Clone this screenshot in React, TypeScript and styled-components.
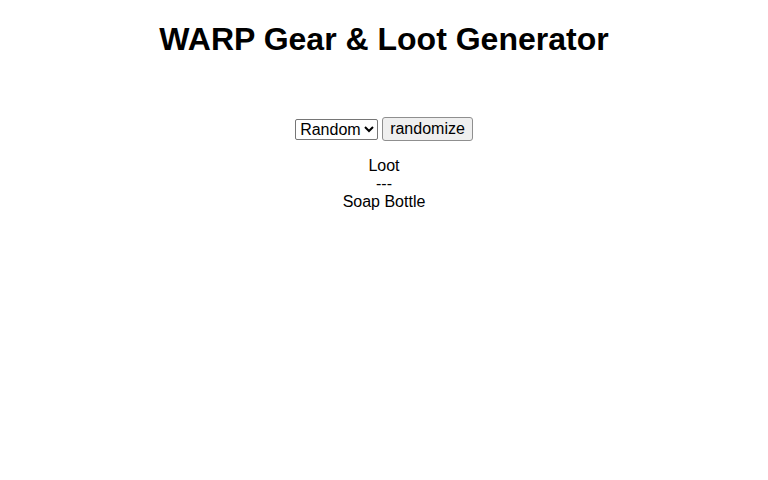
import styled, { createGlobalStyle } from 'styled-components';
import { useState } from 'react';

const GlobalStyle = createGlobalStyle`
  body {
    margin: 8px;
    background: #fff;
    color: #000;
    font-family: 'Liberation Sans', Arial, sans-serif;
  }
`;

const lootTable = ['Soap Bottle', 'Rusty Wrench', 'Flashlight', 'Canned Beans', 'Duct Tape'];

const App = () => {
  const [kind, setKind] = useState('Random');
  const [item, setItem] = useState('Soap Bottle');

  const randomize = () => {
    setItem(lootTable[Math.floor(Math.random() * lootTable.length)]);
  };

  return (
    <Page>
      <GlobalStyle />
      <Title>WARP Gear &amp; Loot Generator</Title>

      <Controls>
        <KindSelect value={kind} onChange={(e) => setKind(e.target.value)}>
          <option>Random</option>
          <option>Gear</option>
          <option>Loot</option>
        </KindSelect>
        <RandomButton onClick={randomize}>randomize</RandomButton>
      </Controls>

      <Result>
        <div>Loot</div>
        <div>---</div>
        <div>{item}</div>
      </Result>
    </Page>
  );
};

export default App;

const Page = styled.div`
  text-align: center;
`;

const Title = styled.h1`
  font-size: 32px;
  font-weight: bold;
  margin: 13px 0 0;
  line-height: 37px;
`;

const Controls = styled.div`
  display: flex;
  justify-content: center;
  align-items: center;
  gap: 4px;
  margin-top: 59px;
`;

const KindSelect = styled.select`
  font-family: 'Liberation Sans', Arial, sans-serif;
  font-size: 16px;
  height: 21px;
  padding: 0;
  border: 1px solid #767676;
  border-radius: 2px;
  background: #fff;
  color: #000;
`;

const RandomButton = styled.button`
  font-family: 'Liberation Sans', Arial, sans-serif;
  font-size: 16px;
  height: 24px;
  padding: 1px 7px;
  border: 1px solid #8f8f8f;
  border-radius: 3px;
  background: #efefef;
  color: #000;
`;

const Result = styled.div`
  margin-top: 16px;
  font-size: 16px;
  line-height: 18px;
`;
